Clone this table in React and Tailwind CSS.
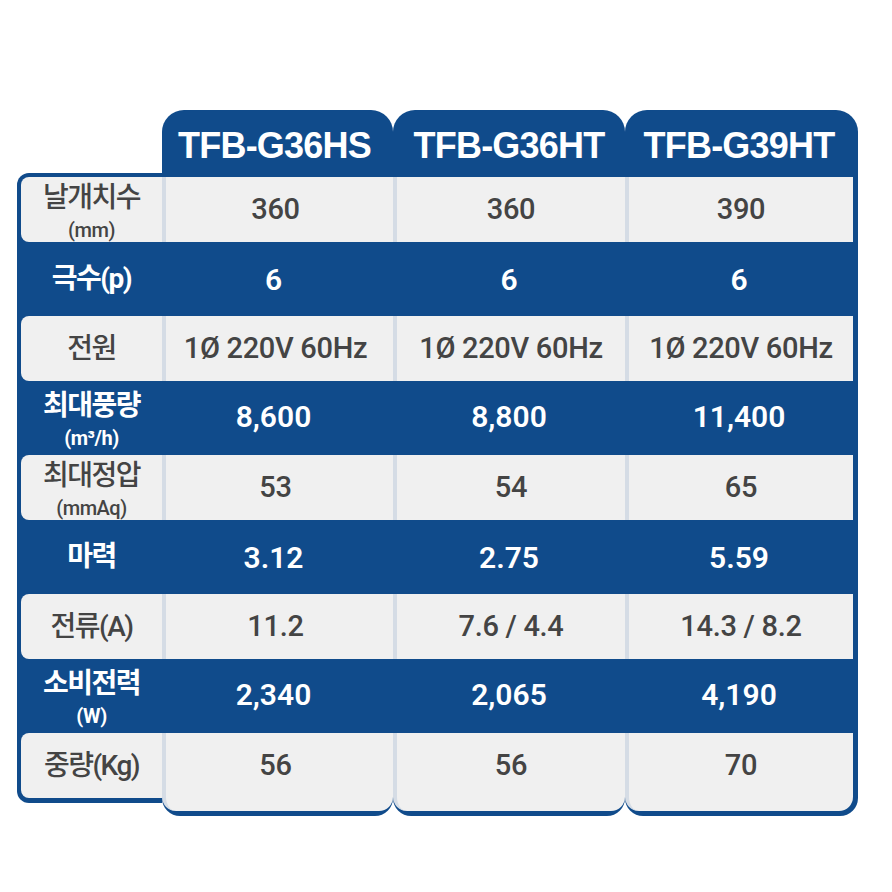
import React from "react";

const labels = [
  { t: "날개치수", s: "(mm)" },
  { t: "극수(p)" },
  { t: "전원" },
  { t: "최대풍량", s: "(m³/h)" },
  { t: "최대정압", s: "(mmAq)" },
  { t: "마력" },
  { t: "전류(A)" },
  { t: "소비전력", s: "(W)" },
  { t: "중량(Kg)" },
];

const cols = [
  {
    name: "TFB-G36HS",
    vals: ["360", "6", "1Ø 220V 60Hz", "8,600", "53", "3.12", "11.2", "2,340", "56"],
  },
  {
    name: "TFB-G36HT",
    vals: ["360", "6", "1Ø 220V 60Hz", "8,800", "54", "2.75", "7.6 / 4.4", "2,065", "56"],
  },
  {
    name: "TFB-G39HT",
    vals: ["390", "6", "1Ø 220V 60Hz", "11,400", "65", "5.59", "14.3 / 8.2", "4,190", "70"],
  },
];

const font = { fontFamily: 'Roboto, "Noto Sans CJK KR", "Liberation Sans", sans-serif' };
const headFont = { fontFamily: '"Liberation Sans", Arial, sans-serif' };

function LabelCell({ item, i }) {
  const light = i % 2 === 0;
  return (
    <div
      className={
        light
          ? "h-[65px] bg-[#f0f0f0] rounded-l-[8px] flex flex-col items-center justify-center text-[#444444]"
          : "h-[74px] flex flex-col items-center justify-center text-white"
      }
    >
      <div
        className={
          (light ? "font-medium " : "font-bold ") +
          "text-[28px] tracking-[-1.5px] " +
          (item.s ? "leading-[40px]" : "leading-[40px]")
        }
      >
        {item.t}
      </div>
      {item.s && (
        <div className={(light ? "font-medium " : "font-bold ") + "text-[20px] leading-[24px] tracking-[-0.5px]"}>
          {item.s}
        </div>
      )}
    </div>
  );
}

function DataColumn({ col, idx }) {
  return (
    <div
      className={
        "flex flex-col bg-[#104b8b] rounded-t-[22px] rounded-b-[18px] pb-[5px] " +
        (idx === 0 ? "w-[231px] " : idx === 1 ? "w-[232px] " : "w-[233px] pr-[5px] ")
      }
    >
      <div
        className="h-[67px] flex items-center justify-center pt-[5px] text-white font-bold text-[36px] tracking-[-0.8px]"
        style={headFont}
      >
        <span className={idx === 0 ? "pr-[6px]" : ""}>{col.name}</span>
      </div>
      {col.vals.map((v, i) => {
        const light = i % 2 === 0;
        const last = i === col.vals.length - 1;
        if (light) {
          return (
            <div
              key={i}
              className={
                "bg-[#f0f0f0] border-l-[4px] border-[#d5dce5] flex items-center justify-center text-[#444444] font-medium text-[29px] tracking-[-0.3px] " +
                (idx === 0 ? "pr-[8px] " : "") +
                (last ? "h-[78px] pb-[13px] rounded-b-[14px]" : "h-[65px]")
              }
            >
              {v}
            </div>
          );
        }
        return (
          <div
            key={i}
            className={
              "h-[74px] flex items-center justify-center text-white font-semibold text-[30px] " +
              (idx === 0 ? "pr-[8px] " : "") +
              (i === 3 || i === 7 ? "pb-[4px]" : "")
            }
          >
            {v}
          </div>
        );
      })}
    </div>
  );
}

export default function App() {
  return (
    <div className="w-[892px] h-[892px] bg-white overflow-hidden" style={font}>
      <div className="flex pt-[110px] pl-[17px]">
        <div className="flex flex-col w-[145px]">
          <div className="h-[63px]" />
          <div className="bg-[#104b8b] rounded-l-[12px] pl-[4px] pt-[4px] pb-[5px] flex flex-col">
            {labels.map((item, i) => (
              <LabelCell key={i} item={item} i={i} />
            ))}
          </div>
        </div>
        {cols.map((c, i) => (
          <DataColumn key={i} col={c} idx={i} />
        ))}
      </div>
    </div>
  );
}
